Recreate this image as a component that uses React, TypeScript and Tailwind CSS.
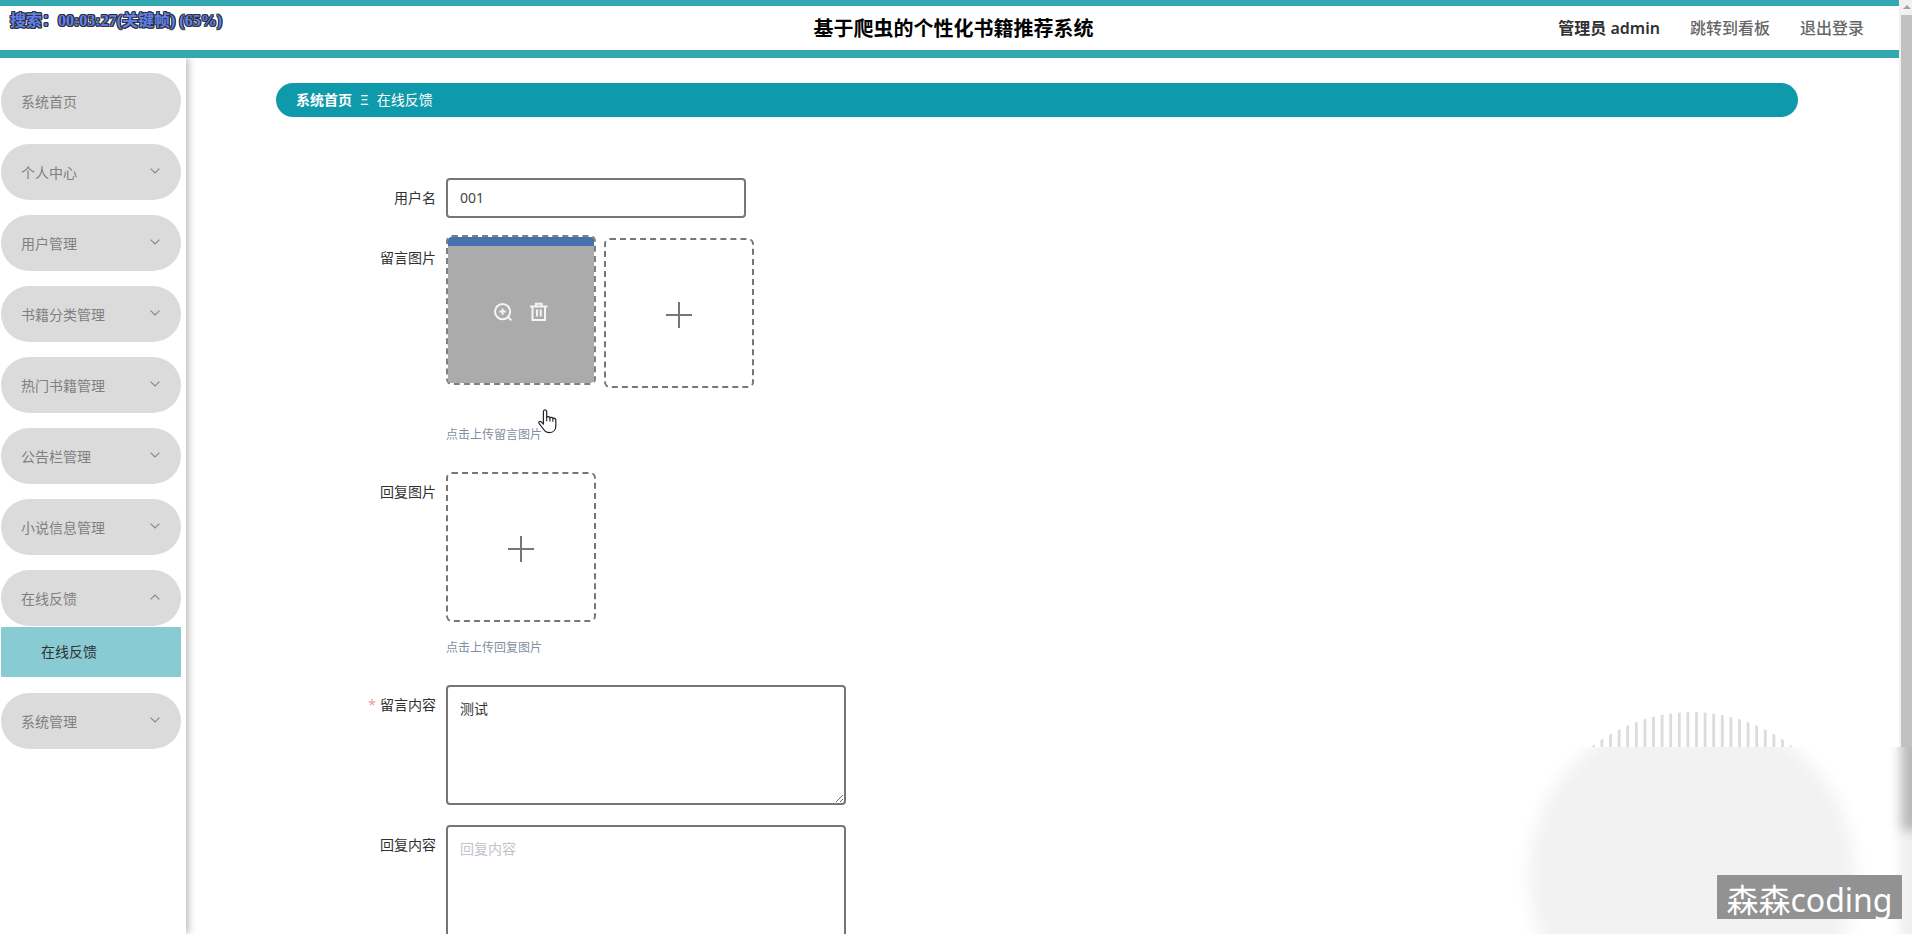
import React from "react";

type MenuItem = { label: string; children?: string[]; expandable?: boolean };

const menu: MenuItem[] = [
  { label: "系统首页" },
  { label: "个人中心", expandable: true },
  { label: "用户管理", expandable: true },
  { label: "书籍分类管理", expandable: true },
  { label: "热门书籍管理", expandable: true },
  { label: "公告栏管理", expandable: true },
  { label: "小说信息管理", expandable: true },
  { label: "在线反馈", expandable: true, children: ["在线反馈"] },
  { label: "系统管理", expandable: true },
];

function Chevron({ up }: { up?: boolean }) {
  return (
    <svg width="12" height="8" viewBox="0 0 12 8" className="mb-1" fill="none" stroke="#858585" strokeWidth="1.1">
      <path d={up ? "M1.6 6.3 6 2l4.4 4.3" : "M1.6 1.7 6 6l4.4-4.3"} />
    </svg>
  );
}

function PlusIcon() {
  return (
    <svg width="28" height="28" viewBox="0 0 28 28" stroke="#767676" strokeWidth="2">
      <path d="M14 1v26M1 14h26" />
    </svg>
  );
}

function ZoomIcon() {
  return (
    <svg width="20" height="20" viewBox="0 0 20 20" fill="none" stroke="#f4f4f4" strokeWidth="2">
      <circle cx="9.6" cy="9.6" r="7.6" />
      <path d="M15.2 15.2 18.4 18.4M9.6 6.4v6.4M6.4 9.6h6.4" />
    </svg>
  );
}

function TrashIcon() {
  return (
    <svg width="20" height="20" viewBox="0 0 20 20" fill="none" stroke="#f4f4f4" strokeWidth="2">
      <path d="M1 4.500h17.500M3.500 4.500V18h12.500V4.500M6.900 4V1.700h5.700V4M8 7.500v7M11.700 7.500v7" />
    </svg>
  );
}

function HandCursor() {
  return (
    <svg width="19" height="25" viewBox="0 0 19 25" className="pointer-events-none absolute left-[92px] top-[171px]">
      <path
        d="M5.4 15.2V2.7C5.4 1.5 6 .8 7 .8s1.700.7 1.700 1.900v5.600c.3-1 3-.9 3.200.6.5-1 2.900-.7 3 .7.7-.8 2.900-.4 2.900 1.500v5.600c0 3.500-2 6.900-6.300 6.900-3.300 0-4.800-1.400-6.100-3.600L1 14.300c-.7-1.300.8-2.600 2.200-1.500z"
        fill="#fff"
        stroke="#222"
        strokeWidth="1.2"
        strokeLinejoin="round"
      />
      <path d="M8.700 8v4.300M11.900 9v3.500M14.900 9.800v2.900" stroke="#222" strokeWidth="1.1" />
    </svg>
  );
}

function Header() {
  return (
    <header className="grid h-[58px] shrink-0 grid-cols-[1fr_auto_1fr] items-center border-t-[6px] border-b-[8px] border-[#33a8b1] bg-white">
      <div />
      <h1 className="pt-0.5 pl-2 text-xl font-bold text-black">基于爬虫的个性化书籍推荐系统</h1>
      <div className="flex items-center justify-end gap-[30px] pr-[35px] text-base">
        <span className="font-semibold text-[#303133]">管理员 admin</span>
        <a href="#board" className="font-medium text-[#666]">跳转到看板</a>
        <a href="#logout" className="font-medium text-[#666]">退出登录</a>
      </div>
    </header>
  );
}

function Sidebar() {
  return (
    <nav className="z-10 w-[186px] shrink-0 bg-white pt-[15px] shadow-[2px_0_8px_rgba(0,0,0,0.3)]">
      <ul className="flex flex-col gap-[15px] pr-[5px] pl-px">
        {menu.map((item) => (
          <li key={item.label}>
            <button
              type="button"
              aria-expanded={item.expandable ? !!item.children : undefined}
              className="flex h-14 w-full items-center justify-between rounded-full bg-[#dbdbdb] px-5 pt-0.5 text-sm text-[#808080]"
            >
              <span>{item.label}</span>
              {item.expandable && <Chevron up={!!item.children} />}
            </button>
            {item.children && (
              <ul className="my-px">
                {item.children.map((child) => (
                  <li key={child}>
                    <a href="#feedback" className="flex h-[50px] items-center bg-[#88cbd3] pl-10 text-sm text-[#303133]">
                      {child}
                    </a>
                  </li>
                ))}
              </ul>
            )}
          </li>
        ))}
      </ul>
    </nav>
  );
}

function Row({ id, label, required, children }: { id: string; label: string; required?: boolean; children: React.ReactNode }) {
  return (
    <div className="flex">
      <label htmlFor={id} className="w-20 shrink-0 text-right whitespace-nowrap text-sm leading-10 text-[#303133]">
        {required && <span className="mr-1 text-[#f59a9a]">*</span>}
        {label}
      </label>
      <div className="relative ml-[10px]">{children}</div>
    </div>
  );
}

function UploadBox({ id, label }: { id: string; label: string }) {
  return (
    <button
      id={id}
      type="button"
      aria-label={label}
      className="flex size-[150px] items-center justify-center rounded-md border-2 border-dashed border-[#767676] pt-1"
    >
      <PlusIcon />
    </button>
  );
}

function FeedbackForm() {
  return (
    <form className="mt-[61px] pl-20">
      <div className="mb-5">
        <Row id="username" label="用户名">
          <input
            id="username"
            defaultValue="001"
            className="h-10 w-[300px] rounded border-2 border-[#767676] px-3 pb-0.5 text-sm text-[#444]"
          />
        </Row>
      </div>
      <div className="mb-[27px]">
        <Row id="message-image" label="留言图片">
          <div className="flex items-start gap-2 pb-[21px]">
            <div className="-mt-[3px] mb-[-1px] flex size-[150px] flex-col overflow-hidden rounded-md border-2 border-dashed border-[#808080] bg-[#ababab] bg-clip-padding">
              <div className="h-[9px] shrink-0 bg-[#4571ae]" />
              <div className="flex flex-1 items-center justify-center gap-4 pb-[5px]">
                <button type="button" aria-label="预览"><ZoomIcon /></button>
                <button type="button" aria-label="删除"><TrashIcon /></button>
              </div>
            </div>
            <UploadBox id="message-image" label="上传留言图片" />
          </div>
          <p className="mt-4 text-xs leading-5 text-[#838fa1]">点击上传留言图片</p>
          <HandCursor />
        </Row>
      </div>
      <div className="mb-[27px]">
        <Row id="reply-image" label="回复图片">
          <UploadBox id="reply-image" label="上传回复图片" />
          <p className="mt-4 text-xs leading-5 text-[#838fa1]">点击上传回复图片</p>
        </Row>
      </div>
      <div className="mb-5">
        <Row id="message" label="留言内容" required>
          <textarea
            id="message"
            defaultValue="测试"
            className="block h-[120px] w-[400px] rounded border-2 border-[#767676] px-3 py-[11px] text-sm leading-[21px] text-[#333]"
          />
        </Row>
      </div>
      <Row id="reply" label="回复内容">
        <textarea
          id="reply"
          placeholder="回复内容"
          className="block h-[120px] w-[400px] rounded border-2 border-[#767676] px-3 py-[11px] text-sm leading-[21px] placeholder:text-[#c0c4cc]"
        />
      </Row>
    </form>
  );
}

function Scrollbar() {
  return (
    <div aria-hidden="true" className="flex w-[13px] shrink-0 flex-col items-end bg-[#f1f1f1]">
      <svg width="11" height="15" viewBox="0 0 11 15" className="shrink-0">
        <path d="M2 9h8L6 5z" fill="#a3a3a3" />
      </svg>
      <div className="h-[814px] w-[11px] bg-[#c1c1c1]" />
    </div>
  );
}

const stripes = Array.from({ length: 24 }, (_, i) => 113.300 + i * 8.600);

function Ornament() {
  return (
    <svg aria-hidden="true" width="432" height="244" viewBox="0 0 432 244" className="pointer-events-none absolute right-0 bottom-0">
      <defs>
        <clipPath id="disc"><circle cx="212" cy="185" r="163" /></clipPath>
        <clipPath id="upper"><rect width="432" height="57" /></clipPath>
        <clipPath id="lower"><rect y="57" width="432" height="187" /></clipPath>
        <filter id="soft" x="-30%" y="-30%" width="160%" height="160%"><feGaussianBlur stdDeviation="8" /></filter>
        <filter id="softBar" x="-300%" y="-20%" width="700%" height="140%"><feGaussianBlur stdDeviation="6" /></filter>
      </defs>
      <g clipPath="url(#upper)">
        <g clipPath="url(#disc)">
          {stripes.map((x) => (
            <rect key={x} x={x - 1.4} y="0" width="2.8" height="60" fill="#dcdcdd" />
          ))}
        </g>
      </g>
      <g clipPath="url(#lower)">
        <rect x="400" y="57" width="32" height="187" fill="#fff" />
        <circle cx="212" cy="185" r="163" fill="#f2f2f2" filter="url(#soft)" />
        <g filter="url(#softBar)">
          <rect x="420" y="20" width="40" height="260" fill="#efefef" />
          <rect x="421" y="20" width="40" height="121" fill="#b8b8b8" />
        </g>
      </g>
    </svg>
  );
}

export default function App() {
  return (
    <div className="relative flex h-screen overflow-hidden bg-white font-['Noto_Sans','Noto_Sans_CJK_SC',sans-serif]">
      <div className="flex min-w-0 flex-1 flex-col">
        <Header />
        <div className="flex min-h-0 flex-1 overflow-hidden">
          <Sidebar />
          <main className="min-w-0 flex-1 overflow-hidden pt-[25px] pr-[101px] pl-[90px]">
            <div className="flex h-[34px] items-center gap-2 rounded-full bg-[#0f9aab] px-5 text-sm text-white">
              <a href="#home" className="font-bold">系统首页</a>
              <span>Ξ</span>
              <span>在线反馈</span>
            </div>
            <FeedbackForm />
          </main>
        </div>
      </div>
      <Scrollbar />
      <Ornament />
      <div className="absolute right-[10px] bottom-[15px] flex h-11 w-[185px] items-center justify-center bg-[#929292] pt-1.5 text-[32px] leading-none whitespace-nowrap text-white">
        森森coding
      </div>
      <div className="absolute top-[9px] left-[10px] z-20 font-['Liberation_Serif','Noto_Sans_CJK_SC',serif] text-base leading-6 font-bold whitespace-nowrap text-[#5f80ee] [text-shadow:1px_0_#2f3038,-1px_0_#2f3038,0_1px_#2f3038,0_-1px_#2f3038,1px_1px_#2f3038,-1px_-1px_#2f3038,1px_-1px_#2f3038,-1px_1px_#2f3038]">
        搜索：00:03:27(关键帧) (65%)
      </div>
    </div>
  );
}
